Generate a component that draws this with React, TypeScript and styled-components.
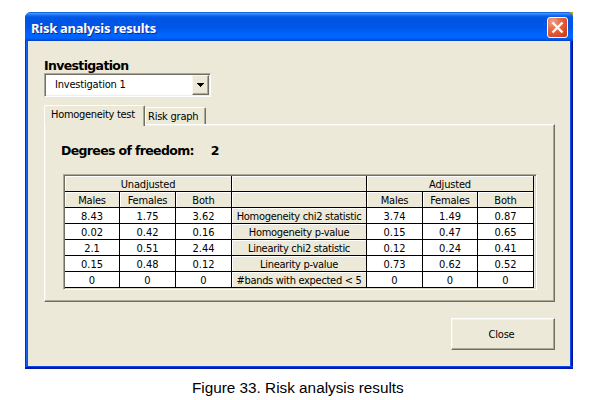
import React from "react";
import styled, { createGlobalStyle } from "styled-components";

const Global = createGlobalStyle`
  * { box-sizing: border-box; }
  html, body { margin: 0; padding: 0; background: #fff; }
  body { width: 593px; height: 400px; overflow: hidden; color: #000; }
`;

const face = "#ece9d8";
const ui = `"DejaVu Sans Condensed", "DejaVu Sans", Tahoma, sans-serif`;
const wide = `"DejaVu Sans", Verdana, sans-serif`;

const Page = styled.main`
  display: flex;
  flex-direction: column;
  width: 593px;
  height: 400px;
  padding: 12px 20px 0 25px;
  font-family: ${ui};
  font-size: 11px;
`;

const Backdrop = styled.div`
  flex: none;
  width: 548px;
  height: 357px;
  background: linear-gradient(90deg, #fffbd0 0 10px, transparent 10px 538px, #a8a040 538px) top / 100% 8px no-repeat;
`;

const Dialog = styled.section`
  display: flex;
  flex-direction: column;
  height: 100%;
  overflow: hidden;
  border-radius: 6px 6px 0 0;
  background: #0048e0;
`;

const TitleBar = styled.header`
  display: flex;
  flex: none;
  align-items: center;
  justify-content: space-between;
  height: 29px;
  padding: 3px 5px 0 6px;
  background: linear-gradient(180deg, #0a50d0 0, #3a93ff 1.5px, #1a73f5 3px, #0058e6 5px, #0054e3 9px, #0055e8 15px, #0062fb 21px, #0066ff 25px, #005bf2 27px, #0040bd 29px);
`;

const Title = styled.h1`
  margin: 0;
  font: bold 13px/20px "Noto Sans", sans-serif;
  letter-spacing: -0.26px;
  color: #fff;
  text-shadow: 1px 1px 0 #0b2a92;
`;

const CloseBox = styled.button`
  display: grid;
  place-items: center;
  width: 21px;
  height: 21px;
  margin-top: -1px;
  padding: 0;
  border: 1px solid #fff;
  border-radius: 3px;
  background: radial-gradient(circle at 25% 20%, #f3a287 0, #e66c4c 35%, #dc4c26 70%, #c53a14 100%);
`;

const Frame = styled.div`
  display: flex;
  flex: 1;
  padding: 0 3px 3px;
  background:
    linear-gradient(180deg, #0a48e8 0 1px, #0019a8 1px 3px) bottom / 100% 3px no-repeat,
    linear-gradient(90deg, #0030d8 0 1px, #1464f4 1px 2px, #0852e8 2px 3px, transparent 3px 545px, #0a4cf0 545px 546px, #0024c0 546px 547px, #001490 547px);
`;

const Body = styled.div`
  display: flex;
  flex: 1;
  flex-direction: column;
  padding: 17px 15px 0 16px;
  background: ${face};
`;

const FieldLabel = styled.label`
  height: 15px;
  font: bold 12.5px/15px ${wide};
  letter-spacing: -0.65px;
`;

const Combo = styled.div`
  display: flex;
  width: 167px;
  height: 24px;
  border: 1px solid;
  border-color: #aca899 #fff #fff #aca899;
  background: #fff;
  box-shadow: inset 1px 1px 0 #716f64, inset -1px -1px 0 #f1efe2;
`;

const ComboValue = styled.span`
  flex: 1;
  padding-left: 10px;
  line-height: 21px;
  letter-spacing: -0.2px;
`;

const ComboArrow = styled.span`
  display: grid;
  place-items: center;
  width: 17px;
  height: 20px;
  margin: 1px 1px 0 0;
  border: 1px solid;
  border-color: #f8f7f0 #716f64 #716f64 #f8f7f0;
  background: ${face};
  box-shadow: inset -1px -1px 0 #aca899;
`;

const Tabs = styled.nav`
  display: flex;
  align-items: flex-end;
  height: 19px;
  margin-top: 8px;
`;

const Tab = styled.div<{ $active?: boolean }>`
  position: relative;
  z-index: ${(p) => (p.$active ? 1 : 0)};
  width: ${(p) => (p.$active ? 101 : 61)}px;
  height: ${(p) => (p.$active ? 21 : 17)}px;
  margin-bottom: ${(p) => (p.$active ? -2 : 0)}px;
  padding-left: ${(p) => (p.$active ? 6 : 2)}px;
  border: 1px solid;
  border-color: #fff #716f64 transparent #fff;
  border-width: 1px 1px 0 1px;
  border-radius: 2px 2px 0 0;
  background: ${face};
  box-shadow: inset -1px 0 0 #aca899;
  line-height: 17px;
  letter-spacing: ${(p) => (p.$active ? -0.3 : -0.22)}px;
  white-space: nowrap;
`;

const TabPanel = styled.section`
  display: flex;
  flex: none;
  flex-direction: column;
  height: 178px;
  padding: 18px 0 0 18px;
  border: 1px solid;
  border-color: #fff #716f64 #716f64 #fff;
  box-shadow: inset -1px -1px 0 #aca899, inset 1px 1px 0 #f4f2e8;
`;

const Degrees = styled.div`
  display: flex;
  gap: 17px;
  height: 16px;
  margin: 0 0 15px -2px;
  font: bold 12.5px/16px ${wide};
  letter-spacing: -0.65px;
`;

const Sheet = styled.div`
  width: 474px;
  height: 116px;
  padding: 1px 0 0 1px;
  border: 1px solid;
  border-color: #aca899 #fff #fff #aca899;
  box-shadow: inset 1px 1px 0 #716f64, inset -1px -1px 0 #d8d5c6;
`;

const Grid = styled.div`
  display: grid;
  grid-template-columns: 55px 56px 56px 135px 56px 55px 56px;
  grid-auto-rows: 16px;
  width: 469px;
`;

const Cell = styled.div<{ $head?: boolean; $span?: number }>`
  grid-column: span ${(p) => p.$span ?? 1};
  border: solid #000;
  border-width: 0 1px 1px 0;
  background: ${(p) => (p.$head ? face : "#fff")};
  box-shadow: inset 1px 1px 0 #fff;
  line-height: 17px;
  letter-spacing: ${(p) => (p.$head ? -0.18 : 0)}px;
  text-align: center;
  white-space: nowrap;
`;

const RowLabel = styled.span`
  letter-spacing: -0.3px;
`;

const CloseButton = styled.button`
  align-self: flex-end;
  width: 104px;
  height: 32px;
  margin-top: 16px;
  padding: 0 3px 0 0;
  border: 1px solid;
  border-color: #fff #716f64 #716f64 #fff;
  background: ${face};
  box-shadow: inset -1px -1px 0 #aca899, inset 1px 1px 0 #f4f2e8;
  font: 11px ${ui};
  letter-spacing: -0.2px;
  color: #000;
`;

const Caption = styled.p`
  margin: 10px 0 0 167px;
  font: 15.3px/18px "Liberation Sans", Arial, sans-serif;
  white-space: nowrap;
`;

const rows: [string, string[], string[]][] = [
  ["Homogeneity chi2 statistic", ["8.43", "1.75", "3.62"], ["3.74", "1.49", "0.87"]],
  ["Homogeneity p-value", ["0.02", "0.42", "0.16"], ["0.15", "0.47", "0.65"]],
  ["Linearity chi2 statistic", ["2.1", "0.51", "2.44"], ["0.12", "0.24", "0.41"]],
  ["Linearity p-value", ["0.15", "0.48", "0.12"], ["0.73", "0.62", "0.52"]],
  ["#bands with expected < 5", ["0", "0", "0"], ["0", "0", "0"]],
];
const groups = ["Males", "Females", "Both"];

export default function App() {
  return (
    <Page>
      <Global />
      <Backdrop>
        <Dialog>
          <TitleBar>
            <Title>Risk analysis results</Title>
            <CloseBox aria-label="Close">
              <svg width="13" height="13" viewBox="0 0 13 13">
                <path d="M1.5 1.5 11.5 11.5M11.5 1.5 1.5 11.5" stroke="#fff" strokeWidth="2.4" />
              </svg>
            </CloseBox>
          </TitleBar>
          <Frame>
            <Body>
              <FieldLabel>Investigation</FieldLabel>
              <Combo>
                <ComboValue>Investigation 1</ComboValue>
                <ComboArrow>
                  <svg width="7" height="4" viewBox="0 0 7 4" shapeRendering="crispEdges">
                    <path d="M0 0H7V1H6V2H5V3H4V4H3V3H2V2H1V1H0Z" />
                  </svg>
                </ComboArrow>
              </Combo>
              <Tabs>
                <Tab $active>Homogeneity test</Tab>
                <Tab>Risk graph</Tab>
              </Tabs>
              <TabPanel>
                <Degrees>
                  <span>Degrees of freedom:</span>
                  <span>2</span>
                </Degrees>
                <Sheet>
                  <Grid>
                    <Cell $head $span={3}>Unadjusted</Cell>
                    <Cell $head />
                    <Cell $head $span={3}>Adjusted</Cell>
                    {groups.map((g) => <Cell $head key={g}>{g}</Cell>)}
                    <Cell $head />
                    {groups.map((g) => <Cell $head key={g}>{g}</Cell>)}
                    {rows.map(([name, left, right]) => (
                      <React.Fragment key={name}>
                        {left.map((v, i) => <Cell key={i}>{v}</Cell>)}
                        <Cell $head><RowLabel>{name}</RowLabel></Cell>
                        {right.map((v, i) => <Cell key={i}>{v}</Cell>)}
                      </React.Fragment>
                    ))}
                  </Grid>
                </Sheet>
              </TabPanel>
              <CloseButton>Close</CloseButton>
            </Body>
          </Frame>
        </Dialog>
      </Backdrop>
      <Caption>Figure 33. Risk analysis results</Caption>
    </Page>
  );
}
